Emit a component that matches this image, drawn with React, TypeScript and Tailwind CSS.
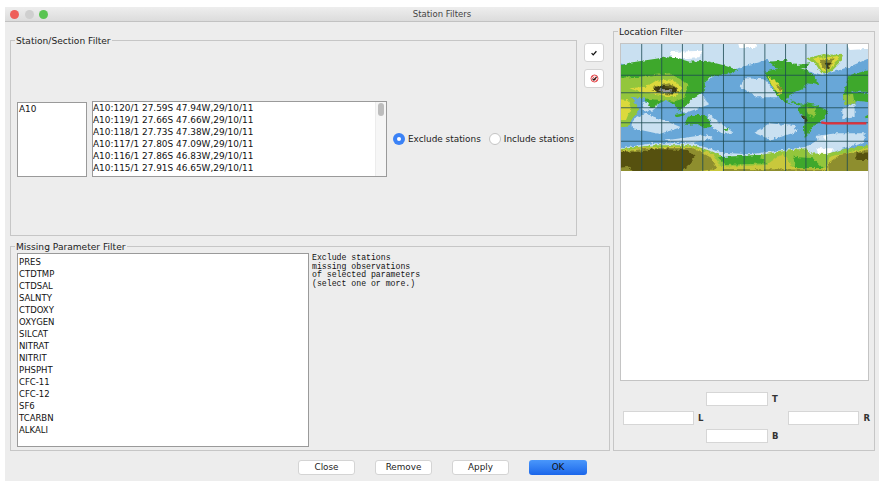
const STATIONS = [
  "A10:120/1 27.59S 47.94W,29/10/11",
  "A10:119/1 27.66S 47.66W,29/10/11",
  "A10:118/1 27.73S 47.38W,29/10/11",
  "A10:117/1 27.80S 47.09W,29/10/11",
  "A10:116/1 27.86S 46.83W,29/10/11",
  "A10:115/1 27.91S 46.65W,29/10/11",
];

const PARAMS = [
  "PRES", "CTDTMP", "CTDSAL", "SALNTY", "CTDOXY", "OXYGEN", "SILCAT", "NITRAT",
  "NITRIT", "PHSPHT", "CFC-11", "CFC-12", "SF6", "TCARBN", "ALKALI",
];

// Map shapes, one list per colour band, painted in this order.
const MAP_LAYERS: { fill: string; shapes: string[] }[] = [
  {
    fill: "#c9e0f1",
    shapes: [
      "35,72 775,72 775,105 720,140 640,165 560,145 470,120 400,140 320,165 285,185 35,125",
      "105,245 150,248 130,275 95,268",
      "235,222 280,222 295,255 225,280 212,268",
      "70,300 105,280 175,305 215,322 150,342 70,325",
      "295,278 328,305 372,338 340,342 305,318",
      "408,175 465,178 510,232 442,232 390,198",
      "480,310 555,318 562,335 485,360 432,338",
      "698,268 735,250 735,292 698,298",
      "35,388 130,370 250,370 340,398 420,403 520,390 590,380 640,352 650,403 775,380 775,410 35,410",
      "618,348 680,340 765,340 765,365 660,400 635,382",
      "160,362 285,345 312,355 250,368",
    ],
  },
  {
    fill: "#ffffff",
    shapes: [
      "180,96 280,92 270,112 190,116",
      "620,385 670,385 660,412 630,410",
      "380,72 450,72 440,84 390,84",
      "640,350 655,345 650,362",
      "700,72 775,72 775,85 720,90",
    ],
  },
  {
    fill: "#3ea82c",
    shapes: [
      "35,143 60,128 100,122 130,118 170,112 205,115 240,125 290,122 340,135 385,150 365,160 330,165 300,172 285,190 290,205 270,225 245,240 225,262 210,275 195,255 170,240 150,250 125,265 105,235 85,222 60,215 35,222",
      "225,305 245,285 280,285 295,290 305,320 285,325 265,312 230,315",
      "345,332 360,320 352,336",
      "195,285 225,280 222,288 200,292",
      "465,155 510,145 560,140 590,150 610,165 620,180 630,195 590,190 585,205 560,215 540,225 530,240 545,255 525,245 500,225 490,200 470,170",
      "480,125 530,120 560,135 600,130 590,145 500,145",
      "540,240 570,250 590,258 565,256",
      "565,265 590,250 620,255 655,272 650,285 625,310 605,320 595,345 585,355 583,320 590,295 570,280",
      "715,170 740,160 775,145 775,215 730,215 700,230",
      "700,235 720,218 775,220 775,250 745,242 715,250",
      "765,290 775,270 775,305",
    ],
  },
  {
    fill: "#93c63c",
    shapes: [
      "35,175 90,170 180,160 235,190 225,235 190,245 130,238 35,225",
      "35,222 60,225 80,250 90,270 70,295 55,320 35,320",
      "590,115 640,103 700,105 690,130 660,160 635,160 620,135",
      "700,225 730,222 735,250 705,256",
      "590,260 620,262 615,290 595,285",
    ],
  },
  {
    fill: "#dcd93c",
    shapes: [
      "60,205 110,200 140,182 190,178 220,205 195,232 140,222 90,215",
      "475,170 505,190 520,215 510,225 490,200",
      "610,115 690,108 670,140 640,155 625,130",
      "35,235 55,240 65,265 50,300 35,300",
    ],
  },
  {
    fill: "#8f8f2e",
    shapes: [
      "630,120 675,115 660,145 645,150",
      "130,200 180,190 205,205 190,225 140,218",
      "498,192 518,205 512,215",
    ],
  },
  {
    fill: "#3d3a12",
    shapes: [
      "645,128 665,128 655,148",
      "125,210 150,197 195,200 205,215 190,222 150,215",
      "570,285 590,290 595,305 585,312 585,297",
    ],
  },
  { fill: "#9b9b9b", shapes: ["150,208 188,208 185,220 155,216"] },
  {
    fill: "#93c63c",
    shapes: [
      "35,390 130,376 250,376 320,398 340,412 450,405 530,392 590,385 600,400 650,402 700,388 775,372 775,453 35,453",
    ],
  },
  {
    fill: "#c9c83c",
    shapes: [
      "35,394 130,381 250,380 310,402 335,440 470,435 520,400 550,440 650,445 660,410 775,378 775,453 35,453",
    ],
  },
  {
    fill: "#3ea82c",
    shapes: ["325,412 450,405 470,430 350,435", "550,410 610,415 640,445 560,445"],
  },
  {
    fill: "#8e8e2e",
    shapes: [
      "35,398 130,384 250,384 300,410 325,447 35,453",
      "655,430 690,405 775,384 775,453 660,453",
      "340,447 650,449 650,453 340,453",
    ],
  },
  {
    fill: "#56510f",
    shapes: [
      "35,395 90,395 130,387 235,390 255,410 235,440 180,453 90,453 60,440 35,445",
      "740,400 775,395 775,420 740,420",
    ],
  },
];

const GRID_X = [97, 157, 219, 280, 342, 404, 466, 528, 589, 651, 713];
const GRID_Y = [166, 218, 263, 308, 364];

// Push points on the map's edge outwards so the rough filter leaves no gap there.
function bleed(points: string) {
  return points
    .split(" ")
    .map((p) => {
      const [x, y] = p.split(",").map(Number);
      const nx = x <= 35 ? 10 : x >= 775 ? 800 : x;
      const ny = y <= 72 ? 50 : y >= 453 ? 480 : y;
      return `${nx},${ny}`;
    })
    .join(" ");
}

function WorldMap() {
  return (
    <svg viewBox="35 72 740 381" preserveAspectRatio="none" className="block w-full h-[127px]">
      <defs>
        <filter
          id="rough"
          filterUnits="userSpaceOnUse"
          x="0"
          y="40"
          width="820"
          height="450"
          colorInterpolationFilters="sRGB"
        >
          <feTurbulence type="fractalNoise" baseFrequency="0.09" numOctaves="3" seed="7" />
          <feDisplacementMap in="SourceGraphic" scale="12" xChannelSelector="R" yChannelSelector="G" />
          <feGaussianBlur stdDeviation="1.2" />
        </filter>
      </defs>
      <rect x="35" y="72" width="740" height="381" fill="#68a7d8" />
      <g filter="url(#rough)">
        {MAP_LAYERS.map((layer, i) => (
          <g key={i} fill={layer.fill}>
            {layer.shapes.map((pts, j) => (
              <polygon key={j} points={bleed(pts)} />
            ))}
          </g>
        ))}
      </g>
      <g stroke="#1d4a52" strokeOpacity="0.8" strokeWidth="3">
        {GRID_X.map((x) => (
          <line key={x} x1={x} y1="72" x2={x} y2="453" />
        ))}
        {GRID_Y.map((y) => (
          <line key={y} x1="35" y1={y} x2="775" y2={y} />
        ))}
      </g>
      <polyline points="635,307 650,310 770,310" fill="none" stroke="#e0323c" strokeWidth="7" />
    </svg>
  );
}

function Legend({ children }: { children: string }) {
  return <legend className="ml-[4px] px-px text-[9.1px] leading-[12px] text-[#222] relative top-[1px]">{children}</legend>;
}

function Field({ label, width }: { label: string; width: string }) {
  return (
    <div className="flex items-center gap-[4px] text-[8.5px] font-bold text-[#333] leading-none">
      <div className={`${width} h-[14px] bg-white border border-[#d6d6d6]`} />
      <span>{label}</span>
    </div>
  );
}

function Radio({ label, on }: { label: string; on?: boolean }) {
  return (
    <label className="flex items-center gap-[3px] text-[8.9px] leading-[12px] text-[#222] whitespace-nowrap">
      {on ? (
        <span className="w-[12px] h-[12px] rounded-full bg-[#3b82f6] flex items-center justify-center">
          <span className="w-[4px] h-[4px] rounded-full bg-white" />
        </span>
      ) : (
        <span className="w-[12px] h-[12px] rounded-full bg-white border border-[#c4c4c4]" />
      )}
      {label}
    </label>
  );
}

function Button({ label, primary }: { label: string; primary?: boolean }) {
  return (
    <button
      className={
        primary
          ? "w-[58px] h-[15px] rounded-[3px] bg-gradient-to-b from-[#4a97fb] to-[#1b66ea] text-[8.8px] leading-none text-[#111]"
          : "w-[57px] h-[15px] rounded-[3px] bg-white border border-[#d4d4d4] text-[8.8px] leading-none text-[#222]"
      }
    >
      {label}
    </button>
  );
}

function IconButton({ children, className }: { children: React.ReactNode; className: string }) {
  return (
    <button className={`w-[20px] bg-white border border-[#d4d4d4] rounded-[3px] flex items-center justify-center ${className}`}>
      {children}
    </button>
  );
}

export default function App() {
  return (
    <div className="ml-[5px] mt-[7px] w-[874px] h-[474px] bg-[#ededed] flex flex-col font-['DejaVu_Sans',sans-serif]">
      {/* title bar */}
      <div className="relative h-[15px] shrink-0 flex items-center justify-center bg-gradient-to-b from-[#eeeeee] to-[#dcdcdc] border-b border-[#c2c2c2]">
        <div className="absolute left-[5px] top-[3px] flex gap-[5.5px]">
          <span className="w-[9px] h-[9px] rounded-full bg-[#ee5f5a]" />
          <span className="w-[9px] h-[9px] rounded-full bg-[#cfcfcf]" />
          <span className="w-[9px] h-[9px] rounded-full bg-[#5ac452]" />
        </div>
        <span className="text-[8.5px] leading-none text-[#444]">Station Filters</span>
      </div>

      <div className="flex pl-[5px] gap-[3px]">
        <div className="w-[600px] mt-[12px] flex flex-col gap-[4px]">
          <div className="flex">
            <fieldset className="w-[567px] min-w-0 h-[202px] border border-[#c6c6c6]">
              <Legend>Station/Section Filter</Legend>
              <div className="mt-[55px] pl-[6px] flex items-center">
                <div className="w-[70px] h-[75px] shrink-0 bg-white border border-[#9a9a9a] px-[1px] text-[8.9px] leading-[12px] text-[#111]">
                  A10
                </div>
                <div className="ml-[5px] w-[295px] shrink-0 h-[76px] bg-white border border-[#9a9a9a] flex overflow-hidden">
                  <div className="flex-1 text-[8.94px] leading-[12px] text-[#111] whitespace-nowrap">
                    {STATIONS.map((s) => (
                      <div key={s}>{s}</div>
                    ))}
                  </div>
                  <div className="w-[11px] bg-[#f6f6f6] border-l border-[#ececec] pt-[1px] flex justify-center">
                    <div className="w-[6px] h-[13px] rounded-full bg-[#bdbdbd]" />
                  </div>
                </div>
                <div className="ml-[6px] flex items-center gap-[8px] bg-[#ededed] relative z-10">
                  <Radio label="Exclude stations" on />
                  <Radio label="Include stations" />
                </div>
              </div>
            </fieldset>
            <div className="ml-[7px] mt-[9px] flex flex-col gap-[7px]">
              <IconButton className="h-[19px]">
                <svg width="8" height="8" viewBox="0 0 10 10">
                  <path d="M2 5.2 4 7.3 8 2.8" fill="none" stroke="#111" strokeWidth="1.6" />
                </svg>
              </IconButton>
              <IconButton className="h-[19px]">
                <svg width="9" height="9" viewBox="0 0 11 11">
                  <circle cx="5.5" cy="5.5" r="4.3" fill="#fbdcdc" stroke="#e4474a" strokeWidth="1.2" />
                  <path d="M2.5 2.5 8.5 8.5" stroke="#e4474a" strokeWidth="1" />
                  <path d="M3 5.7 4.8 7.5 8 3.5" fill="none" stroke="#111" strokeWidth="1.3" />
                </svg>
              </IconButton>
            </div>
          </div>

          <fieldset className="h-[211px] min-w-0 border border-[#c6c6c6]">
            <Legend>Missing Parameter Filter</Legend>
            <div className="pl-[6px] pt-[1px] flex">
              <div className="w-[292px] h-[194px] bg-white border border-[#9a9a9a] px-[1px] pt-[2px] text-[8.5px] leading-[12px] text-[#111]">
                {PARAMS.map((p) => (
                  <div key={p}>{p}</div>
                ))}
              </div>
              <div className="ml-[3px] pt-[1px] font-['Liberation_Mono',monospace] text-[8.2px] leading-[8.6px] text-[#111] whitespace-nowrap">
                <div>Exclude stations</div>
                <div>missing observations</div>
                <div>of selected parameters</div>
                <div>(select one or more.)</div>
              </div>
            </div>
          </fieldset>
        </div>

        <fieldset className="w-[262px] min-w-0 h-[426px] mt-[3px] border border-[#c6c6c6]">
          <Legend>Location Filter</Legend>
          <div className="mx-[6px] mt-[6px] w-[249px] h-[338px] bg-white border border-[#c4c4c4]">
            <WorldMap />
          </div>
          <div className="mt-[11px] flex flex-col">
            <div className="ml-[92px]">
              <Field label="T" width="w-[62px]" />
            </div>
            <div className="mt-[5px] ml-[9px] flex">
              <Field label="L" width="w-[71px]" />
              <div className="ml-[85px]">
                <Field label="R" width="w-[71px]" />
              </div>
            </div>
            <div className="mt-[4px] ml-[92px]">
              <Field label="B" width="w-[62px]" />
            </div>
          </div>
        </fieldset>
      </div>

      <div className="mt-[9px] pl-[1px] flex justify-center gap-[20px]">
        <Button label="Close" />
        <Button label="Remove" />
        <Button label="Apply" />
        <Button label="OK" primary />
      </div>
    </div>
  );
}
